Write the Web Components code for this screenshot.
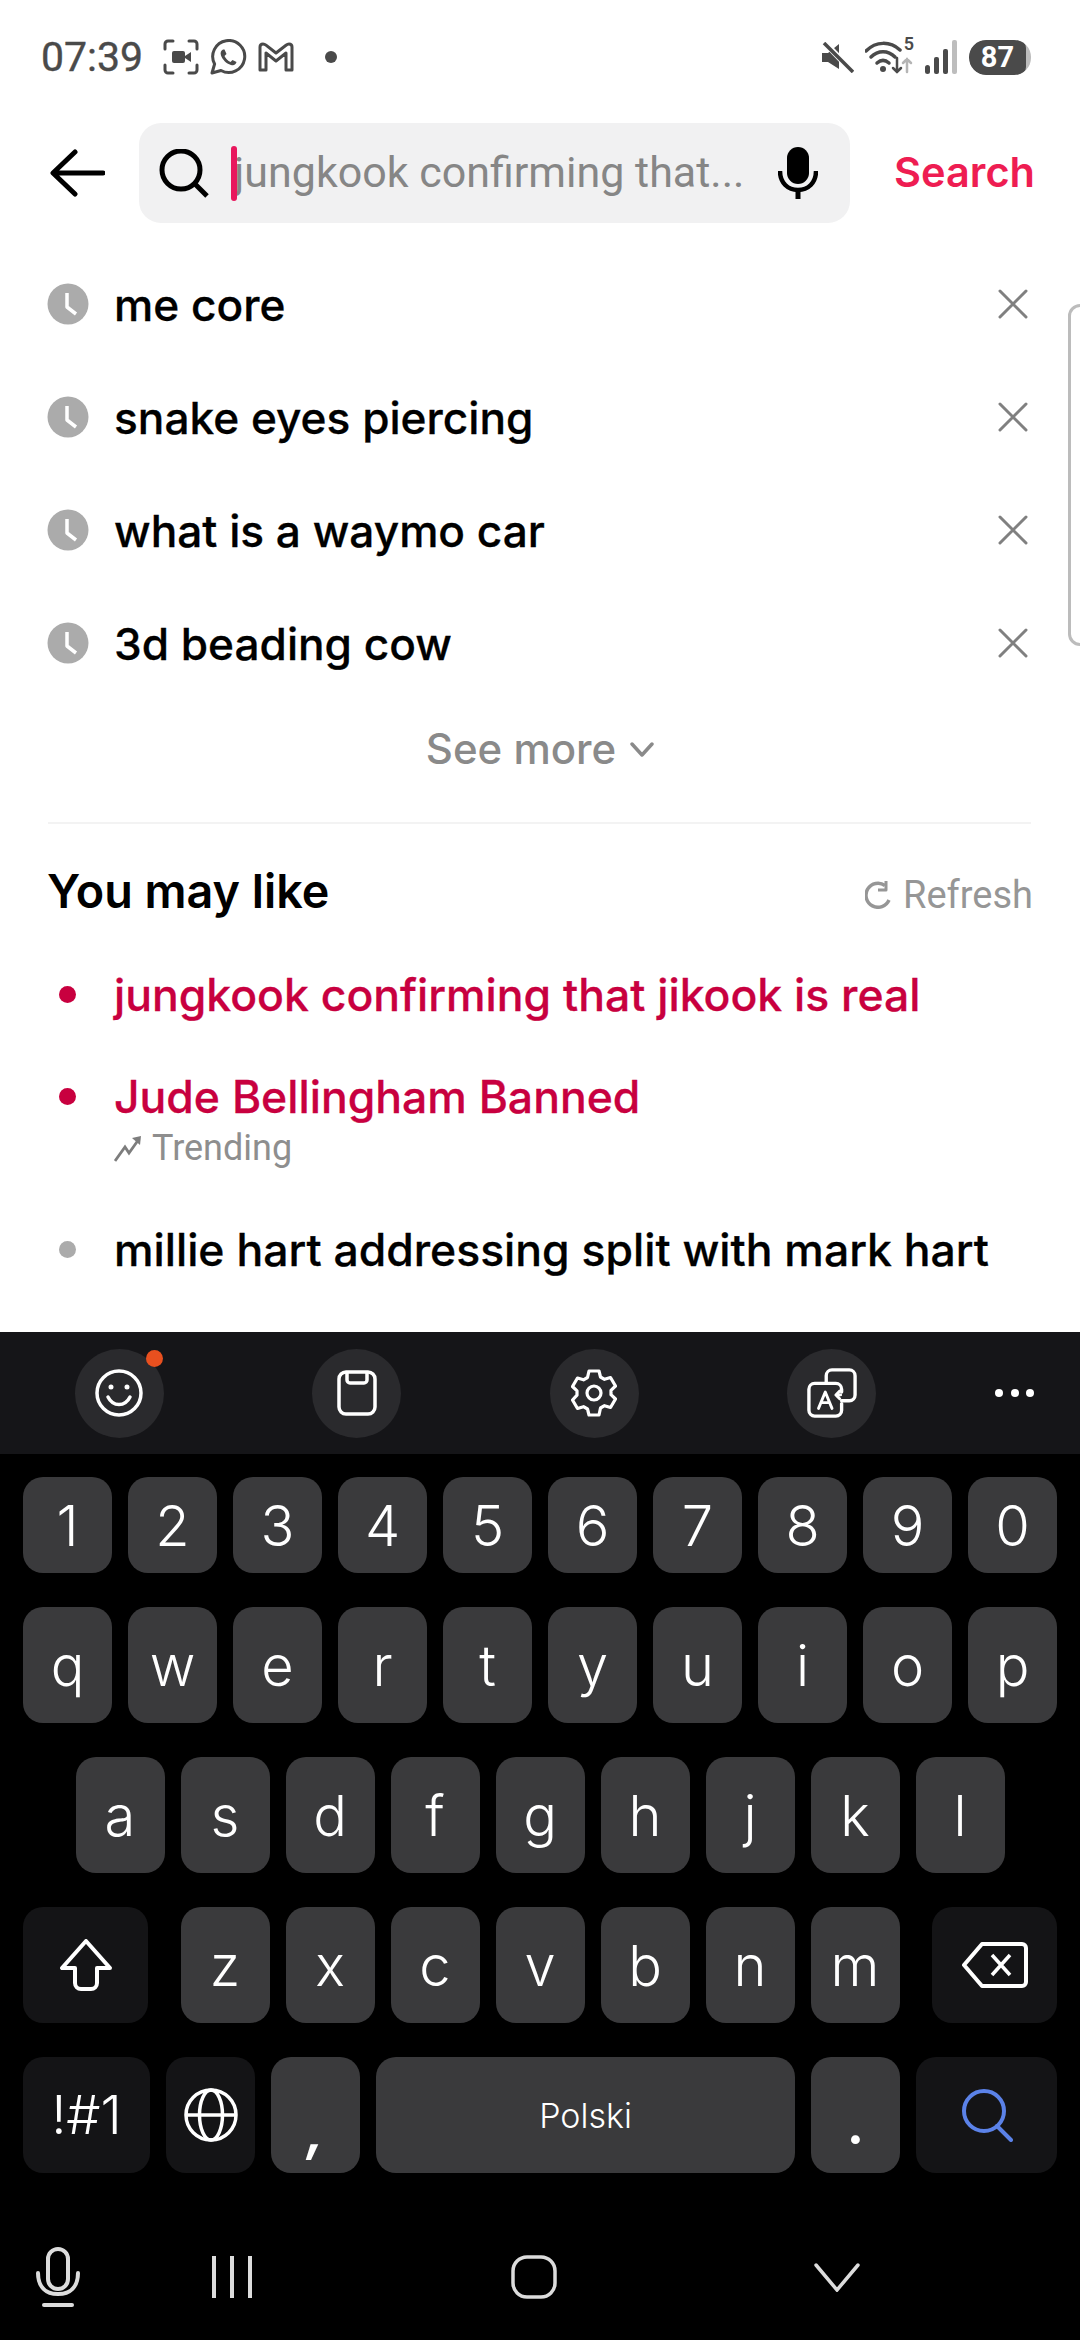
<!DOCTYPE html>
<html>
<head>
<meta charset="utf-8">
<style>
  html, body { margin: 0; padding: 0; background: #fff; }
  body { width: 1080px; height: 2340px; overflow: hidden; font-family: Inter, "Noto Sans", sans-serif; }
</style>
</head>
<body>
<phone-screen></phone-screen>
<script>
const ICONS = {
  record: `<svg width="36" height="36" viewBox="0 0 36 36" fill="none" stroke="#4a4a4a" stroke-width="3" stroke-linecap="round"><path d="M2 10V5a3 3 0 0 1 3-3h5M26 2h5a3 3 0 0 1 3 3v5M34 26v5a3 3 0 0 1-3 3h-5M10 34H5a3 3 0 0 1-3-3v-5"/><rect x="9" y="12" width="13" height="12" rx="2" fill="#4a4a4a" stroke="none"/><path d="M22 17l6-4v10l-6-4z" fill="#4a4a4a" stroke="none"/></svg>`,
  whatsapp: `<svg width="37" height="36" viewBox="0 0 37 36" fill="none"><path d="M2 34l2.6-9A16 16 0 1 1 11 31.500z" stroke="#4a4a4a" stroke-width="3" stroke-linejoin="round"/><path d="M13 10.500c-2 1-3 3-2 6 1.500 4 5 8 10 9.500 3 .8 5-.5 5.500-3l-4-2-2 2c-2.500-1-5-3.500-6-6l2-2-2-4.500z" fill="#4a4a4a"/></svg>`,
  gmail: `<svg width="36" height="30" viewBox="0 0 36 30" fill="none" stroke="#4a4a4a" stroke-width="3" stroke-linejoin="round"><path d="M2 28V5q0-3 3-3 1.500 0 3 1.200L18 11 28 3.200Q29.500 2 31 2q3 0 3 3v23h-6V11l-10 8-10-8v17z"/></svg>`,
  mute: `<svg width="32" height="31" viewBox="0 0 32 31"><path d="M0 11h6l11-9v25L6 20H0z" fill="#4a4a4a"/><path d="M3 1l28 29" stroke="#fff" stroke-width="6"/><path d="M2 1l29 29" stroke="#4a4a4a" stroke-width="3.500"/></svg>`,
  wifi: `<svg width="48" height="34" viewBox="0 0 48 34" fill="none" stroke="#4a4a4a" stroke-width="3.500" stroke-linecap="round"><path d="M1 11C11 1 25 1 35 10"/><path d="M6 17c7-7 17-7 24 0"/><path d="M12 23c4-3.500 8-3.500 12 0"/><circle cx="18" cy="29" r="3" fill="#4a4a4a" stroke="none"/><path d="M32 18v14M28 28l4 4 4-4" stroke-width="2.500"/><path d="M42 32V19M38 23l4-4 4 4" stroke="#b5b5b5" stroke-width="2.500"/></svg>`,
  signal: `<svg width="32" height="34" viewBox="0 0 32 34"><rect x="0" y="25" width="5" height="9" rx="2.500" fill="#4a4a4a"/><rect x="9" y="17" width="5" height="17" rx="2" fill="#4a4a4a"/><rect x="18" y="9" width="5" height="25" rx="2" fill="#4a4a4a"/><rect x="27" y="0" width="5" height="34" rx="2" fill="#bdbdbd"/></svg>`,
  back: `<svg width="55" height="48" viewBox="0 0 55 48" fill="none" stroke="#000" stroke-width="5" stroke-linecap="round" stroke-linejoin="round"><path d="M53 24H4M25 3L3 24l22 21"/></svg>`,
  search: `<svg width="50" height="49" viewBox="0 0 50 49" fill="none" stroke="#000" stroke-width="5"><circle cx="22" cy="21" r="19"/><path d="M35 34l13 13"/></svg>`,
  mic: `<svg width="40" height="52" viewBox="0 0 40 52" fill="none"><rect x="9" y="0" width="22" height="37" rx="11" fill="#000"/><path d="M2 24c0 12 8 19 18 19s18-7 18-19" stroke="#000" stroke-width="4.500"/><path d="M20 42v10" stroke="#000" stroke-width="5"/></svg>`,
  clock: `<svg width="42" height="42" viewBox="0 0 42 42"><circle cx="21" cy="21" r="20.500" fill="#ababab"/><path d="M20 10v14l9 7" fill="none" stroke="#fff" stroke-width="3.500" stroke-linejoin="round"/></svg>`,
  close: `<svg width="30" height="30" viewBox="0 0 30 30" stroke="#808080" stroke-width="3" stroke-linecap="round"><path d="M2 2l26 26M28 2L2 28"/></svg>`,
  chevron: `<svg width="24" height="15" viewBox="0 0 24 15" fill="none" stroke="#8a8a8a" stroke-width="3.500" stroke-linecap="round" stroke-linejoin="round"><path d="M2 2l10 11L22 2"/></svg>`,
  refresh: `<svg width="28" height="28" viewBox="0 0 28 28" fill="none" stroke="#969696" stroke-width="3.500"><path d="M24 19A12 12 0 1 1 20 4.500"/><path d="M21 0v9h-8" stroke-width="3" stroke-linejoin="round"/></svg>`,
  trend: `<svg width="28" height="27" viewBox="0 0 28 27" fill="none" stroke="#7d7d7d" stroke-width="2.800"><path d="M1 26l10-14 4 6L25 4"/><path d="M18 3l9-2-1 9z" fill="#7d7d7d" stroke="none"/></svg>`,
  smile: `<svg width="48" height="48" viewBox="0 0 48 48" fill="none" stroke="#fff" stroke-width="3.500" stroke-linecap="round"><circle cx="24" cy="24" r="22"/><path d="M13 28c5 10 17 10 22 0"/><circle cx="16" cy="18" r="1.500" fill="#fff" stroke-width="2"/><circle cx="32" cy="18" r="1.500" fill="#fff" stroke-width="2"/></svg>`,
  clip: `<svg width="40" height="46" viewBox="0 0 40 46" fill="none" stroke="#fff" stroke-width="3.500" stroke-linejoin="round"><rect x="2" y="2" width="36" height="42" rx="7"/><path d="M10 2v8a3 3 0 0 0 3 3h14a3 3 0 0 0 3-3V2"/></svg>`,
  gear: `<svg width="46" height="48" viewBox="0 0 46 48" fill="none" stroke="#fff" stroke-width="3.200" stroke-linejoin="round"><path d="M18 2h10l1.500 6 4 2.300 6-1.800 5 8.500-4.500 4.300v4.400L44.500 30l-5 8.500-6-1.800-4 2.300L28 46H18l-1.500-6-4-2.300-6 1.800-5-8.500L6 26.200v-4.400L1.500 17.500l5-8.500 6 1.800 4-2.300z"/><circle cx="23" cy="24" r="7"/></svg>`,
  translate: `<svg width="50" height="50" viewBox="0 0 52 52" fill="none" stroke="#fff" stroke-width="3.500" stroke-linecap="round" stroke-linejoin="round"><path d="M36 37v7a6 6 0 0 1-6 6H8a6 6 0 0 1-6-6V22a6 6 0 0 1 6-6h22a6 6 0 0 1 6 6v3"/><path d="M20 15V8a6 6 0 0 1 6-6h18a6 6 0 0 1 6 6v20a6 6 0 0 1-6 6h-8"/><path d="M35 28h-5l4-4m-4 4l4 4" stroke-width="3"/><path d="M12 42l7-17 7 17M14.500 36h9" stroke-width="3"/></svg>`,
  shift: `<svg width="52" height="52" viewBox="0 0 52 52" fill="none" stroke="#fff" stroke-width="4" stroke-linejoin="round"><path d="M26 2L2 29h13v15a6 6 0 0 0 6 6h10a6 6 0 0 0 6-6V29h13z"/></svg>`,
  del: `<svg width="66" height="46" viewBox="0 0 66 46" fill="none" stroke="#fff" stroke-width="4" stroke-linejoin="round"><path d="M20 2h40a4 4 0 0 1 4 4v34a4 4 0 0 1-4 4H20L2 23z"/><path d="M30 13l18 20M48 13L30 33" stroke-width="3.500"/></svg>`,
  globe: `<svg width="54" height="54" viewBox="0 0 54 54" fill="none" stroke="#fff" stroke-width="3.500"><circle cx="27" cy="27" r="25"/><ellipse cx="27" cy="27" rx="11.500" ry="25"/><path d="M2 27h50"/></svg>`,
  findBlue: `<svg width="52" height="54" viewBox="0 0 52 54" fill="none" stroke="#5b82e8" stroke-width="4"><circle cx="23" cy="23" r="20"/><path d="M36 38l14 14" stroke-linecap="round"/></svg>`,
  navMic: `<svg width="44" height="60" viewBox="0 0 44 60" fill="none" stroke="#dcdcdc" stroke-width="4" stroke-linecap="round"><rect x="12" y="2" width="20" height="40" rx="10"/><path d="M2 26c0 14 8 21 20 21s20-7 20-21"/><path d="M8 58h28" stroke-width="4"/></svg>`,
  navRecent: `<svg width="42" height="44" viewBox="0 0 42 44" stroke="#dcdcdc" stroke-width="4"><path d="M3 1v42M21 1v42M39 1v42"/></svg>`,
  navHome: `<svg width="46" height="44" viewBox="0 0 46 44" fill="none" stroke="#dcdcdc" stroke-width="3.500"><rect x="2" y="2" width="42" height="40" rx="14"/></svg>`,
  navDown: `<svg width="46" height="29" viewBox="0 0 46 29" fill="none" stroke="#dcdcdc" stroke-width="3.500" stroke-linecap="round"><path d="M2 2l21 25L44 2"/></svg>`
};

class StatusBar extends HTMLElement {
  constructor() {
    super();
    this.attachShadow({mode: "open"}).innerHTML = `
      <style>
        :host { display: flex; align-items: center; height: 114px; padding: 0 49px 0 41px; color: #4a4a4a; box-sizing: border-box; }
        .time { font: 400 41px/1 Roboto, sans-serif; -webkit-text-stroke: .4px #4a4a4a; margin-right: 20px; }
        .left, .right { display: flex; align-items: center; }
        .left svg { margin-right: 11px; display: block; }
        .dot { width: 12px; height: 12px; border-radius: 50%; background: #4a4a4a; margin-left: 20px; }
        .right { margin-left: auto; }
        .wifi { position: relative; margin-left: 11px; height: 34px; }
        .wifi span { position: absolute; right: -1px; top: -5px; font: 600 18px/1 Roboto, sans-serif; }
        .signal { margin-left: 12px; }
        .batt { margin-left: 12px; width: 62px; height: 35px; border-radius: 17px; background: #bdbdbd; overflow: hidden; }
        .batt div { width: 57px; height: 35px; border-radius: 17px 8px 8px 17px; background: #4a4a4a; color: #fff; font: 700 29px/35px Roboto, sans-serif; text-align: center; }
        svg { display: block; }
      </style>
      <span class="time">07:39</span>
      <div class="left">${ICONS.record}${ICONS.whatsapp}${ICONS.gmail}<span class="dot"></span></div>
      <div class="right">
        ${ICONS.mute}
        <div class="wifi">${ICONS.wifi}<span>5</span></div>
        <div class="signal">${ICONS.signal}</div>
        <div class="batt"><div>87</div></div>
      </div>`;
  }
}

class SearchHeader extends HTMLElement {
  constructor() {
    super();
    this.attachShadow({mode: "open"}).innerHTML = `
      <style>
        :host { display: flex; align-items: center; height: 133px; padding: 9px 45px 24px 50px; box-sizing: border-box; }
        svg { display: block; flex: none; }
        .bar { display: flex; align-items: center; width: 711px; height: 100px; margin-left: 34px; padding: 0 32px 0 20px; box-sizing: border-box; background: #f1f1f2; border-radius: 22px; }
        .caret { flex: none; width: 6px; height: 55px; margin-left: 22px; background: #e8175d; border-radius: 3px; position: relative; z-index: 1; }
        .hint { flex: 1; margin-left: -3px; font: 400 43px/1.2 Roboto, sans-serif; color: #868686; white-space: nowrap; overflow: hidden; }
        .go { margin-left: auto; font: 600 41.500px/1 Inter, sans-serif; color: #ee1d52; }
      </style>
      ${ICONS.back}
      <div class="bar">${ICONS.search}<span class="caret"></span><span class="hint"><slot></slot></span>${ICONS.mic}</div>
      <span class="go">Search</span>`;
  }
}

class HistoryRow extends HTMLElement {
  constructor() {
    super();
    this.attachShadow({mode: "open"}).innerHTML = `
      <style>
        :host { display: flex; align-items: center; height: 113px; padding: 0 52px 0 47px; font: 500 44.200px/1 Inter, sans-serif; color: #000; -webkit-text-stroke: .3px #000; }
        svg { display: block; flex: none; }
        .txt { margin-left: 25px; flex: 1; padding-top: 3px; }
      </style>
      ${ICONS.clock}<span class="txt"><slot></slot></span>${ICONS.close}`;
  }
}

class SeeMore extends HTMLElement {
  constructor() {
    super();
    this.attachShadow({mode: "open"}).innerHTML = `
      <style>
        :host { display: flex; align-items: center; justify-content: center; gap: 14px; height: 100px; font: 500 42px/1 Inter, sans-serif; color: #8a8a8a; }
      </style>
      <span><slot></slot></span>${ICONS.chevron}`;
  }
}

class SectionHead extends HTMLElement {
  constructor() {
    super();
    this.attachShadow({mode: "open"}).innerHTML = `
      <style>
        :host { display: flex; align-items: center; height: 104px; margin-top: 15px; padding: 0 47px; font: 600 46.700px/1 Inter, sans-serif; color: #000; }
        .refresh { display: flex; align-items: center; gap: 10px; margin-left: auto; padding-top: 8px; font: 400 38px/1 Roboto, sans-serif; color: #969696; }
      </style>
      <span><slot></slot></span>
      <span class="refresh">${ICONS.refresh}Refresh</span>`;
  }
}

class SuggestRow extends HTMLElement {
  static get observedAttributes() { return ["sub"]; }
  constructor() {
    super();
    this.attachShadow({mode: "open"}).innerHTML = `
      <style>
        :host { display: grid; grid-template-columns: 67px 1fr; padding: 22px 0 22px 47px; font: 500 44.500px/60px Inter, sans-serif; color: #000; white-space: nowrap; -webkit-text-stroke: .3px currentColor; }
        :host([hot]) { color: #c8003f; padding-bottom: 20px; }
        .dot { width: 17px; height: 17px; margin: 21px 0 0 12px; border-radius: 50%; background: #ababab; }
        :host([hot]) .dot { background: #c8003f; }
        .sub { display: none; align-items: center; gap: 10px; height: 40px; margin: 1px 0 10px; font: 400 36px/40px Roboto, sans-serif; color: #8e8e8e; -webkit-text-stroke: 0; }
        :host([sub]) .sub { display: flex; }
        svg { display: block; }
      </style>
      <span class="dot"></span>
      <div><slot></slot><div class="sub">${ICONS.trend}<span id="sub"></span></div></div>`;
  }
  attributeChangedCallback(name, old, val) {
    this.shadowRoot.getElementById("sub").textContent = val;
  }
}

class KeyCap extends HTMLElement {
  constructor() {
    super();
    this.attachShadow({mode: "open"}).innerHTML = `
      <style>
        :host { display: flex; align-items: center; justify-content: center; flex: none; width: 89px; padding-top: 2px; box-sizing: border-box; border-radius: 20px; background: #3a3a3c; color: #fff; font: 350 56px/1 Inter, sans-serif; }
        :host([fn]) { background: #141416; padding-top: 0; }
        svg { display: block; }
      </style>
      <slot></slot>`;
  }
}

class KbToolbar extends HTMLElement {
  constructor() {
    super();
    this.attachShadow({mode: "open"}).innerHTML = `
      <style>
        :host { display: block; flex: none; height: 122px; background: #151518; }
        .row { display: grid; grid-template-columns: 238px 237px 238px 237px 130px; height: 100%; align-items: center; justify-items: center; }
        .btn { width: 89px; height: 89px; border-radius: 50%; background: #2a2a2d; display: flex; align-items: center; justify-content: center; position: relative; }
        .badge { position: absolute; top: 1px; right: 1px; width: 17px; height: 17px; border-radius: 50%; background: #e8501f; }
        .dots { display: flex; gap: 7.500px; justify-self: start; margin-left: 45px; }
        .dots i { width: 8px; height: 8px; border-radius: 50%; background: #fff; }
        svg { display: block; }
      </style>
      <div class="row">
        <div class="btn">${ICONS.smile}<span class="badge"></span></div>
        <div class="btn">${ICONS.clip}</div>
        <div class="btn">${ICONS.gear}</div>
        <div class="btn">${ICONS.translate}</div>
        <div class="dots"><i></i><i></i><i></i></div>
      </div>`;
  }
}

class KeyBoard extends HTMLElement {
  constructor() {
    super();
    const letters = s => s.split("").map(c => `<key-cap>${c}</key-cap>`).join("");
    this.attachShadow({mode: "open"}).innerHTML = `
      <style>
        :host { display: flex; flex: none; flex-direction: column; gap: 34px; padding: 23px 23px 0; background: #000; }
        .row { display: flex; gap: 16px; height: 116px; }
        .digits { height: 96px; }
        .mid { justify-content: center; }
        .low { justify-content: space-between; }
        .group { display: flex; gap: 16px; }
        svg { display: block; }
      </style>
      <div class="row digits">${letters("1234567890")}</div>
      <div class="row">${letters("qwertyuiop")}</div>
      <div class="row mid">${letters("asdfghjkl")}</div>
      <div class="row low">
        <key-cap fn style="width:125px">${ICONS.shift}</key-cap>
        <div class="group">${letters("zxcvbnm")}</div>
        <key-cap fn style="width:125px">${ICONS.del}</key-cap>
      </div>
      <div class="row">
        <key-cap fn style="width:127px;font-size:54px">!#1</key-cap>
        <key-cap fn>${ICONS.globe}</key-cap>
        <key-cap style="align-items:flex-end"><span style="font:italic 700 52px/1 Inter;padding-bottom:15px">,</span></key-cap>
        <key-cap style="width:419px;font-size:34px">Polski</key-cap>
        <key-cap style="align-items:flex-end"><span style="font:700 52px/1 Inter;padding-bottom:21px">.</span></key-cap>
        <key-cap fn style="width:141px">${ICONS.findBlue}</key-cap>
      </div>`;
  }
}

class NavBar extends HTMLElement {
  constructor() {
    super();
    this.attachShadow({mode: "open"}).innerHTML = `
      <style>
        :host { display: grid; flex: none; grid-template-columns: 116px 232px 372px 234px; height: 167px; align-items: center; justify-items: center; padding-top: 41px; box-sizing: border-box; background: #000; }
        svg { display: block; }
      </style>
      ${ICONS.navMic}${ICONS.navRecent}${ICONS.navHome}${ICONS.navDown}`;
  }
}

class PhoneScreen extends HTMLElement {
  constructor() {
    super();
    this.attachShadow({mode: "open"}).innerHTML = `
      <style>
        :host { display: flex; flex-direction: column; width: 1080px; height: 2340px; overflow: hidden; position: relative; }
        .page { flex: none; height: 1332px; background: #fff; }
        hr { height: 2px; margin: 23px 49px 0 48px; border: 0; background: #f3f3f3; }
        .handle { position: absolute; left: 1068px; top: 304px; width: 14px; height: 336px; border: 3px solid #bcbcbc; border-radius: 12px 0 0 12px; }
      </style>
      <div class="page">
        <status-bar></status-bar>
        <search-header>jungkook confirming that...</search-header>
        <history-row>me core</history-row>
        <history-row>snake eyes piercing</history-row>
        <history-row>what is a waymo car</history-row>
        <history-row>3d beading cow</history-row>
        <see-more>See more</see-more>
        <hr>
        <section-head>You may like</section-head>
        <suggest-row hot>jungkook confirming that jikook is real</suggest-row>
        <suggest-row hot sub="Trending">Jude Bellingham Banned</suggest-row>
        <suggest-row>millie hart addressing split with mark hart</suggest-row>
      </div>
      <kb-toolbar></kb-toolbar>
      <key-board></key-board>
      <nav-bar></nav-bar>
      <div class="handle"></div>`;
  }
}

customElements.define("status-bar", StatusBar);
customElements.define("search-header", SearchHeader);
customElements.define("history-row", HistoryRow);
customElements.define("see-more", SeeMore);
customElements.define("section-head", SectionHead);
customElements.define("suggest-row", SuggestRow);
customElements.define("key-cap", KeyCap);
customElements.define("kb-toolbar", KbToolbar);
customElements.define("key-board", KeyBoard);
customElements.define("nav-bar", NavBar);
customElements.define("phone-screen", PhoneScreen);
</script>
</body>
</html>
